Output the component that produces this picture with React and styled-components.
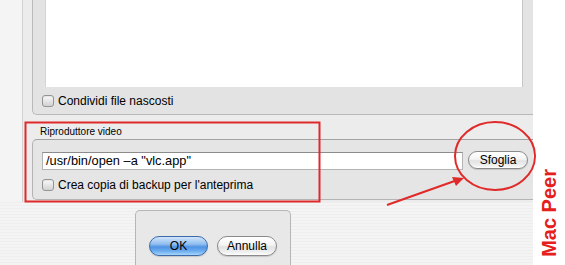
import { createGlobalStyle } from "styled-components";
import styled from "styled-components";

const GlobalStyle = createGlobalStyle`
  html, body {
    margin: 0;
    padding: 0;
    background: #fff;
  }
  * {
    box-sizing: border-box;
  }
`;

const Page = styled.div`
  position: relative;
  width: 565px;
  height: 265px;
  display: flex;
  overflow: hidden;
  background: #fff;
  font-family: "Liberation Sans", Arial, sans-serif;
  color: #000;
`;

const Main = styled.div`
  width: 533px;
  display: flex;
  flex-direction: column;
`;

const Prefs = styled.div`
  height: 202px;
  display: flex;
`;

const Gutter = styled.div`
  width: 22px;
  background: #f4f4f4;
`;

const Window = styled.div`
  flex: 1;
  display: flex;
  flex-direction: column;
  background: #ececec;
  border-left: 1px solid #d2d2d2;
  padding-left: 9px;
`;

const SharedBox = styled.div`
  height: 115px;
  display: flex;
  flex-direction: column;
  background: #e3e3e3;
  border: 1px solid #b9b9b9;
  border-top: none;
  border-right: none;
  border-bottom-left-radius: 5px;
`;

const FileList = styled.div`
  height: 87px;
  margin: 0 10px 0 12px;
  background: #fff;
  border-left: 1px solid #d4d4d4;
  border-right: 1px solid #c6c6c6;
`;

const CheckRow = styled.label`
  display: flex;
  align-items: center;
  gap: 4px;
  font-size: 12px;
  padding-left: ${(p) => p.$indent || 0}px;
  height: ${(p) => p.$height || 14}px;
  margin-top: ${(p) => p.$top || 0}px;
`;

const Check = styled.span`
  width: 12px;
  height: 12px;
  border: 1px solid #949494;
  border-radius: 3px;
  background: linear-gradient(#fafafa, #e2e2e2 60%, #d2d2d2);
  box-shadow: inset 0 1px 1px rgba(0, 0, 0, 0.08);
`;

const GroupLabel = styled.div`
  margin: 11px 0 1px 8px;
  height: 12px;
  line-height: 12px;
  font-size: 10px;
`;

const PlayerBox = styled.div`
  height: 61px;
  background: #e5e5e5;
  border: 1px solid #b4b4b4;
  border-top-color: #a2a2a2;
  border-right: none;
  border-radius: 5px 0 0 5px;
  padding: 12px 0 0 9px;
`;

const FieldRow = styled.div`
  display: flex;
  align-items: flex-start;
  gap: 5px;
`;

const Field = styled.div`
  width: 421px;
  height: 18px;
  background: #fff;
  border: 1px solid #b3b3b3;
  border-top-color: #8c8c8c;
  font-size: 12.8px;
  line-height: 16px;
  padding-left: 3px;
  white-space: nowrap;
`;

const PillButton = styled.button`
  width: ${(p) => p.$w}px;
  height: ${(p) => p.$h}px;
  margin-top: ${(p) => p.$top || 0}px;
  padding: 0;
  font-family: "Liberation Sans", Arial, sans-serif;
  font-size: 12px;
  color: #000;
  border-radius: 10px;
  border: 1px solid ${(p) => (p.$primary ? "#3c6aa8" : "#8a8a8a")};
  background: ${(p) =>
    p.$primary
      ? "linear-gradient(#d2e5fa 0%, #8fbdf0 40%, #4f92e4 55%, #6fb0f0 80%, #a8d6fb 100%)"
      : "linear-gradient(#ffffff 0%, #f4f4f4 45%, #e2e2e2 55%, #f0f0f0 85%, #ffffff 100%)"};
  box-shadow: 0 1px 1px rgba(0, 0, 0, 0.15);
`;

const Bottom = styled.div`
  flex: 1;
  display: flex;
  padding: 8px 0 0 135px;
  background: repeating-linear-gradient(#eeeeee 0 1px, #f4f4f4 1px 3px);
`;

const Sheet = styled.div`
  width: 156px;
  display: flex;
  gap: 9px;
  padding: 25px 0 0 13px;
  background: #e8e8e8;
  border: 1px solid #b6b6b6;
  border-bottom: none;
  border-radius: 5px 5px 0 0;
`;

const Side = styled.div`
  flex: 1;
  display: flex;
  align-items: flex-end;
  padding: 0 0 8px 6px;
`;

const Brand = styled.div`
  writing-mode: vertical-rl;
  transform: rotate(180deg);
  font-weight: bold;
  font-size: 20px;
  line-height: 21px;
  color: #e3201b;
  white-space: nowrap;
`;

const Marks = styled.svg`
  position: absolute;
  left: 0;
  top: 0;
  pointer-events: none;
`;

export default function App() {
  return (
    <Page>
      <GlobalStyle />
      <Main>
        <Prefs>
          <Gutter />
          <Window>
            <SharedBox>
              <FileList />
              <CheckRow $indent={9} $height={27}>
                <Check />
                Condividi file nascosti
              </CheckRow>
            </SharedBox>
            <GroupLabel>Riproduttore video</GroupLabel>
            <PlayerBox>
              <FieldRow>
                <Field>/usr/bin/open –a "vlc.app"</Field>
                <PillButton $w={60} $h={18} $top={-1}>
                  Sfoglia
                </PillButton>
              </FieldRow>
              <CheckRow $top={9} $height={12}>
                <Check />
                Crea copia di backup per l'anteprima
              </CheckRow>
            </PlayerBox>
          </Window>
        </Prefs>
        <Bottom>
          <Sheet>
            <PillButton $primary $w={59} $h={20}>
              OK
            </PillButton>
            <PillButton $w={60} $h={20}>
              Annulla
            </PillButton>
          </Sheet>
        </Bottom>
      </Main>
      <Side>
        <Brand>Mac Peer</Brand>
      </Side>
      <Marks width="565" height="265" viewBox="0 0 565 265">
        <rect x="25.5" y="122.5" width="294" height="79" fill="none" stroke="#e02a2a" strokeWidth="2" />
        <ellipse cx="495" cy="156" rx="40" ry="34" fill="none" stroke="#e02a2a" strokeWidth="2" />
        <line x1="387" y1="205" x2="456" y2="180.5" stroke="#e02a2a" strokeWidth="2" />
        <polygon points="464,178 452,177 456,186" fill="#e02a2a" />
      </Marks>
    </Page>
  );
}
